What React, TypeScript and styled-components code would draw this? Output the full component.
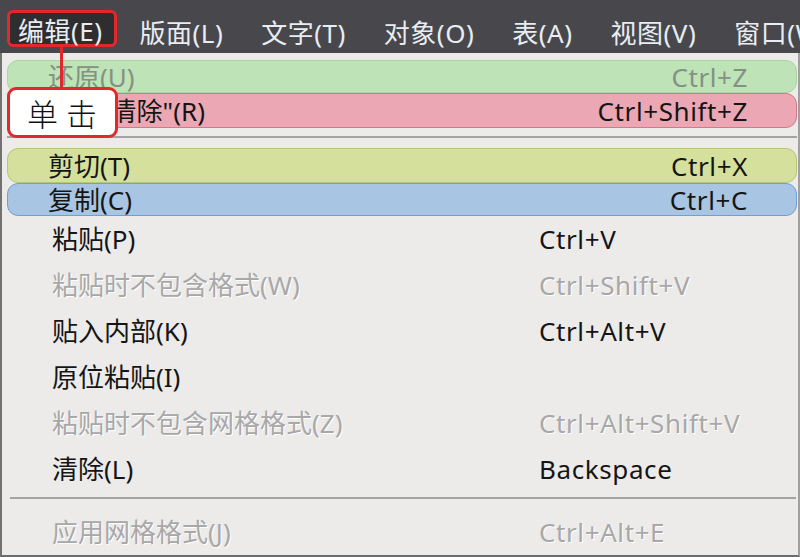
import styled, { createGlobalStyle, css } from 'styled-components';

const GlobalStyle = createGlobalStyle`
  html, body {
    margin: 0;
    padding: 0;
    background: #ecebea;
  }
  body {
    font-family: "Noto Sans", "Noto Sans CJK SC", sans-serif;
  }
`;

const Screen = styled.div`
  position: relative;
  width: 800px;
  height: 557px;
  overflow: hidden;
  background: #ecebea;
  display: flex;
  flex-direction: column;
`;

const MenuBar = styled.div`
  flex: none;
  height: 53px;
  box-sizing: border-box;
  padding-top: 10px;
  background: #48484c;
  display: flex;
  align-items: flex-start;
  white-space: nowrap;
  overflow: hidden;
`;

const MenuTitle = styled.div<{ $active?: boolean }>`
  flex: none;
  height: 37px;
  box-sizing: border-box;
  display: flex;
  align-items: center;
  padding: 8px 19px 0;
  font-size: 26px;
  line-height: 1;
  letter-spacing: 0.5px;
  color: #e8edf3;

  ${(p) =>
    p.$active &&
    css`
      margin: 0 4px 0 7px;
      padding: 5px 11px 0 8px;
      border: 3px solid #e2282d;
      border-radius: 6px;
      background: #2e2e31;
    `}
`;

const Dropdown = styled.div`
  flex: 1;
  display: flex;
  flex-direction: column;
  padding: 7px 1px 0 5px;
  border-left: 2px solid #727272;
  border-right: 2px solid #a0a0a0;
  border-bottom: 2px solid #6c6c6c;
`;

type Tone = 'green' | 'pink' | 'lime' | 'blue';

const tones: Record<Tone, { bg: string; border: string }> = {
  green: { bg: '#bde3b6', border: '#a8d5a0' },
  pink: { bg: '#eba8b4', border: '#d77889' },
  lime: { bg: '#d4e09b', border: '#b7c57e' },
  blue: { bg: '#a8c5e3', border: '#6f9fd9' },
};

const HighlightRow = styled.div<{ $tone: Tone; $h: number }>`
  height: ${(p) => p.$h}px;
  box-sizing: border-box;
  display: flex;
  align-items: center;
  justify-content: space-between;
  padding: 0 48px 0 40px;
  border: 1px solid ${(p) => tones[p.$tone].border};
  border-radius: 11px;
  background: ${(p) => tones[p.$tone].bg};
  font-size: 26px;
  line-height: 1;
`;

const Row = styled.div`
  height: 46px;
  display: grid;
  grid-template-columns: 487px 1fr;
  align-items: center;
  padding-left: 45px;
  font-size: 26px;
  line-height: 1;
`;

const Text = styled.span<{ $disabled?: boolean; $onColor?: boolean; $shortcut?: boolean }>`
  color: #151515;
  white-space: nowrap;
  letter-spacing: ${(p) => (p.$shortcut ? '0.6px' : '0')};

  ${(p) =>
    p.$disabled &&
    css`
      color: #a8a8a8;
      text-shadow: 1px 1px 0 #ffffff;
    `}

  ${(p) =>
    p.$disabled &&
    p.$onColor &&
    css`
      color: #869084;
      text-shadow: none;
    `}
`;

const Separator = styled.div<{ $inset?: boolean }>`
  flex: none;
  height: 2px;
  background: #a3a3a3;
  margin: ${(p) => (p.$inset ? '5px 1px 10px 3px' : '8px 0 10px 0')};
`;

const Connector = styled.div`
  position: absolute;
  left: 60px;
  top: 47px;
  width: 3px;
  height: 41px;
  background: #e2282d;
`;

const Callout = styled.div`
  position: absolute;
  left: 7px;
  top: 87px;
  width: 111px;
  height: 51px;
  box-sizing: border-box;
  border: 3px solid #e2282d;
  border-radius: 9px;
  background: #ffffff;
  display: flex;
  align-items: center;
  padding-left: 17px;
  font-family: "Noto Sans CJK SC", sans-serif;
  font-size: 31px;
  font-weight: 300;
  letter-spacing: 8px;
  color: #111111;
`;

const menus = ['编辑(E)', '版面(L)', '文字(T)', '对象(O)', '表(A)', '视图(V)', '窗口(W)'];

const topItems: { label: string; key: string; tone: Tone; h: number; disabled?: boolean }[] = [
  { label: '还原(U)', key: 'Ctrl+Z', tone: 'green', h: 33, disabled: true },
  { label: '重做"清除"(R)', key: 'Ctrl+Shift+Z', tone: 'pink', h: 35 },
];

const clipItems: { label: string; key: string; tone: Tone; h: number }[] = [
  { label: '剪切(T)', key: 'Ctrl+X', tone: 'lime', h: 35 },
  { label: '复制(C)', key: 'Ctrl+C', tone: 'blue', h: 33 },
];

const pasteItems = [
  { label: '粘贴(P)', key: 'Ctrl+V' },
  { label: '粘贴时不包含格式(W)', key: 'Ctrl+Shift+V', disabled: true },
  { label: '贴入内部(K)', key: 'Ctrl+Alt+V' },
  { label: '原位粘贴(I)', key: '' },
  { label: '粘贴时不包含网格格式(Z)', key: 'Ctrl+Alt+Shift+V', disabled: true },
  { label: '清除(L)', key: 'Backspace' },
];

export default function App() {
  return (
    <Screen>
      <GlobalStyle />
      <MenuBar>
        {menus.map((m, i) => (
          <MenuTitle key={m} $active={i === 0}>
            {m}
          </MenuTitle>
        ))}
      </MenuBar>

      <Dropdown>
        {topItems.map((item) => (
          <HighlightRow key={item.label} $tone={item.tone} $h={item.h}>
            <Text $disabled={item.disabled} $onColor>
              {item.label}
            </Text>
            <Text $disabled={item.disabled} $onColor $shortcut>
              {item.key}
            </Text>
          </HighlightRow>
        ))}

        <Separator />

        {clipItems.map((item) => (
          <HighlightRow key={item.label} $tone={item.tone} $h={item.h}>
            <Text>{item.label}</Text>
            <Text $shortcut>{item.key}</Text>
          </HighlightRow>
        ))}

        {pasteItems.map((item) => (
          <Row key={item.label}>
            <Text $disabled={item.disabled}>{item.label}</Text>
            <Text $disabled={item.disabled} $shortcut>
              {item.key}
            </Text>
          </Row>
        ))}

        <Separator $inset />

        <Row>
          <Text $disabled>应用网格格式(J)</Text>
          <Text $disabled $shortcut>
            Ctrl+Alt+E
          </Text>
        </Row>
      </Dropdown>

      <Connector />
      <Callout>单击</Callout>
    </Screen>
  );
}
